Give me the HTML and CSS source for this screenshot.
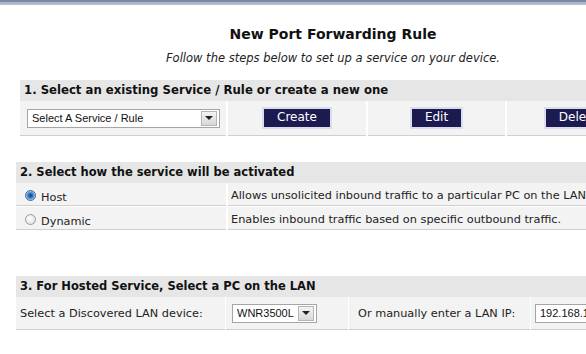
FILE: index.html
```html
<!DOCTYPE html>
<html lang="en">
<head>
    <meta charset="UTF-8">
    <title>New Port Forwarding Rule</title>
    <link rel="stylesheet" href="styles.css">
</head>
<body>
    <div class="topbar"></div>
    <div class="page">
        <h1>New Port Forwarding Rule</h1>
        <p class="intro">Follow the steps below to set up a service on your device.</p>

        <div class="section step1">
            <div class="section-title">1. Select an existing Service / Rule or create a new one</div>
            <div class="row">
                <div class="cell">
                    <div class="dropdown wide">
                        <span class="dropdown-value">Select A Service / Rule</span>
                        <span class="dropdown-arrow"></span>
                    </div>
                </div>
                <div class="cell center"><span class="btn">Create</span></div>
                <div class="cell center"><span class="btn">Edit</span></div>
                <div class="cell center"><span class="btn">Delete</span></div>
            </div>
        </div>

        <div class="section step2">
            <div class="section-title">2. Select how the service will be activated</div>
            <div class="row">
                <div class="cell option"><span class="radio checked"></span>Host</div>
                <div class="cell">Allows unsolicited inbound traffic to a particular PC on the LAN</div>
            </div>
            <div class="row">
                <div class="cell option"><span class="radio"></span>Dynamic</div>
                <div class="cell">Enables inbound traffic based on specific outbound traffic.</div>
            </div>
        </div>

        <div class="section step3">
            <div class="section-title">3. For Hosted Service, Select a PC on the LAN</div>
            <div class="row">
                <div class="cell">Select a Discovered LAN device:</div>
                <div class="cell">
                    <div class="dropdown">
                        <span class="dropdown-value">WNR3500L</span>
                        <span class="dropdown-arrow"></span>
                    </div>
                </div>
                <div class="cell">Or manually enter a LAN IP:</div>
                <div class="cell"><span class="textbox">192.168.1.2</span></div>
            </div>
        </div>
    </div>
</body>
</html>
```

FILE: styles.css
```css
:root {
    --band: #e6e6e6;
    --cell: #f3f3f3;
    --line: #cfcfcf;
    --navy: #1b1b4f;
    --text: #222;
}

body {
    margin: 0;
    background: white;
    color: var(--text);
    font-family: "DejaVu Sans", Verdana, sans-serif;
    font-size: 11.3px;
    overflow: hidden;
}

.topbar {
    height: 5px;
    background: linear-gradient(#7d86a3 0, #7d86a3 2px, #a9b1c6 2px, #b9c0d2 5px);
}

.page {
    width: 634px;
    margin-left: 16px;
}

h1 {
    margin: 21px 0 0;
    font-size: 14px;
    text-align: center;
    color: #111;
}

.intro {
    margin: 9px 0 0;
    font-style: italic;
    font-size: 11.5px;
    text-align: center;
}

.section-title {
    background: var(--band);
    font-weight: bold;
    font-size: 11.5px;
    height: 21px;
    line-height: 21px;
    padding-left: 4px;
    color: #111;
}

.row {
    display: grid;
    column-gap: 2px;
}

.cell {
    background: var(--cell);
    border-bottom: 1px solid var(--line);
    display: flex;
    align-items: center;
    padding-left: 4px;
}

.cell.center {
    justify-content: center;
    padding-left: 0;
}

/* step 1 */
.step1 {
    margin: 15px 0 0 4px;
}

.step1 .section-title {
    font-size: 11.7px;
}

.step1 .row {
    grid-template-columns: 206px 138px 137px 1fr;
    height: 35px;
}

.step1 .cell:first-child {
    padding-left: 7px;
}

.btn {
    background: var(--navy);
    color: white;
    font-size: 12px;
    padding: 1px 13px 2px;
    border: 2px solid #dcdcef;
    line-height: 15px;
}

/* dropdowns */
.dropdown {
    display: flex;
    align-items: center;
    background: white;
    border: 1px solid #a5a5a5;
    height: 17px;
    font-family: "Liberation Sans", Arial, sans-serif;
    font-size: 11px;
    color: #111;
}

.dropdown.wide {
    width: 191px;
}

.dropdown-value {
    flex: 1;
    padding: 0 4px;
}

.dropdown-arrow {
    width: 14px;
    height: 13px;
    margin-right: 2px;
    background: linear-gradient(#f4f4f4, #d8d8d8);
    border: 1px solid #b5b5b5;
    display: flex;
    align-items: center;
    justify-content: center;
}

.dropdown-arrow::after {
    content: "";
    border-left: 4px solid transparent;
    border-right: 4px solid transparent;
    border-top: 4px solid #222;
}

/* step 2 */
.step2 {
    margin-top: 26px;
}

.step2 .row {
    grid-template-columns: 210px 1fr;
    height: 23px;
    margin-bottom: 1px;
}

.step2 .cell {
    padding-left: 3px;
    padding-top: 2px;
    box-sizing: border-box;
}

.step2 .cell.option {
    padding-left: 9px;
    padding-top: 6px;
}

.radio {
    width: 11px;
    height: 11px;
    border-radius: 50%;
    border: 1px solid #9a9a9a;
    background: radial-gradient(circle at 40% 40%, #fff, #d9d9d9);
    margin: -4px 5px 0 0;
    box-sizing: border-box;
}

.radio.checked {
    border-color: #3a6a9a;
    background: radial-gradient(circle, #123f73 0, #2c6fb8 2px, #7fb1e3 4px, #e6f0fa 5px);
}

/* step 3 */
.step3 {
    margin-top: 46px;
}

.step3 .row {
    grid-template-columns: 209px 122px 181px 1fr;
    column-gap: 1px;
    height: 33px;
}

.step3 .cell:nth-child(2) {
    padding-left: 6px;
}

.step3 .cell:nth-child(3) {
    padding-left: 9px;
}

.textbox {
    display: block;
    background: white;
    border: 1px solid #a5a5a5;
    height: 17px;
    line-height: 17px;
    width: 120px;
    padding-left: 4px;
    font-family: "Liberation Sans", Arial, sans-serif;
    font-size: 11px;
    color: #111;
}
```
